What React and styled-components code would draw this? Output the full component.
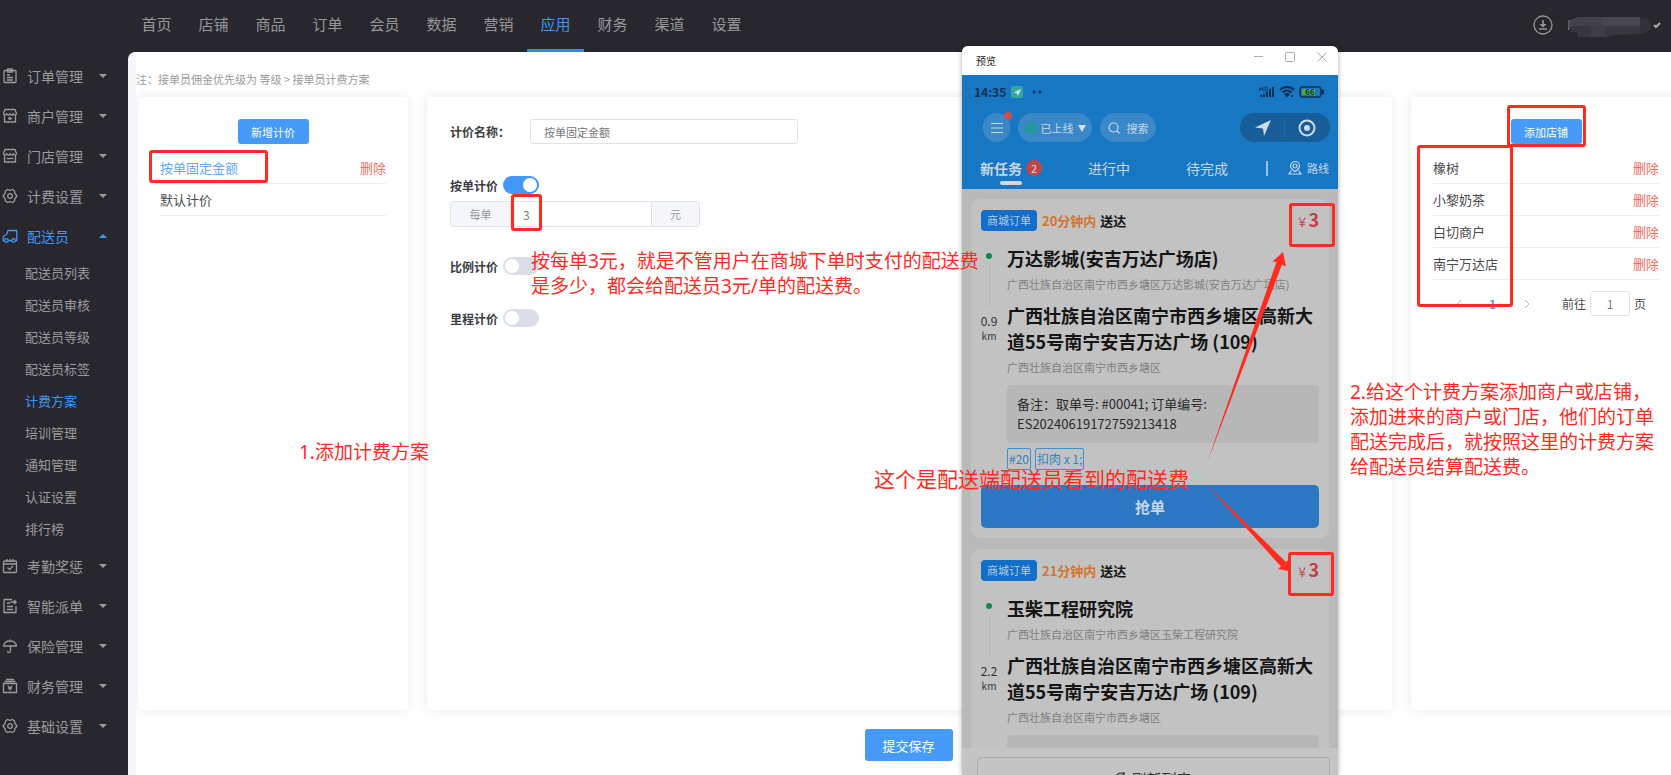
import { useState } from "react";

import styled, { createGlobalStyle, css } from "styled-components";

const GlobalStyle = createGlobalStyle`
  :root {
    --dark: #28272d;
    --blue: #469bf8;
    --red: #ff2b1e;
    --danger: #ff6a5f;
    --line: #ebeef3;
    --border: #dfe3ea;
  }

  * {
    box-sizing: border-box;
  }

  body {
    margin: 0;
    overflow: hidden;
    background: var(--dark);
    color: #4a4b4e;
    font-family: "Noto Sans CJK SC", sans-serif;
    font-size: 13px;
  }

  button,
  input {
    font-family: inherit;
  }

  a {
    color: inherit;
    text-decoration: none;
  }

  button {
    border: 0;
    padding: 0;
    cursor: pointer;
  }
`;

const Page = styled.div`
  position: relative;
  display: flex;
  flex-direction: column;
  height: 100vh;
  overflow: hidden;
`;

/* ---------- top bar ---------- */

const TopBar = styled.header`
  flex: none;
  display: flex;
  justify-content: space-between;
  align-items: stretch;
  height: 52px;
  padding: 0 10px 0 128px;
  color: #97979b;
`;

const TopNav = styled.nav`
  display: flex;
`;

const TopLink = styled.a`
  width: 57px;
  padding-bottom: 1px;
  border-bottom: 3px solid ${(props) => (props.$active ? "#3b86d8" : "transparent")};
  color: ${(props) => (props.$active ? "#3f95f3" : "inherit")};
  font-size: 15px;
  line-height: 48px;
  text-align: center;
`;

const Account = styled.div`
  display: flex;
  align-items: center;
  gap: 14px;
  padding-bottom: 2px;
`;

const IconButton = styled.button`
  display: flex;
  background: none;
  color: inherit;
`;

/* ---------- side menu ---------- */

const Body = styled.div`
  flex: 1;
  display: flex;
  min-height: 0;
`;

const SideBar = styled.nav`
  flex: none;
  width: 128px;
  padding-top: 4px;
  color: #9b9b9f;
`;

const MenuItem = styled.button`
  display: flex;
  align-items: center;
  width: 100%;
  height: 40px;
  padding: 0 21px 0 2px;
  background: none;
  color: ${(props) => (props.$open ? "#3f95f3" : "inherit")};
  font-size: 14px;
  text-align: left;

  span {
    flex: 1;
    margin-left: 9px;
  }
`;

const Caret = styled.i`
  border: 4px solid transparent;
  ${(props) =>
    props.$up
      ? css`
          border-top: 0;
          border-bottom-color: currentColor;
        `
      : css`
          border-bottom: 0;
          border-top-color: currentColor;
        `}
`;

const SubMenu = styled.div`
  display: flex;
  flex-direction: column;
  padding: 1px 0;
`;

const SubLink = styled.a`
  padding-left: 25px;
  color: ${(props) => (props.$active ? "#3f95f3" : "inherit")};
  font-size: 13px;
  line-height: 32px;
`;

/* ---------- content ---------- */

const Main = styled.main`
  flex: 1;
  display: flex;
  flex-direction: column;
  min-width: 0;
  overflow: hidden;
  border-left: 8px solid #f5f7fa;
  border-top-left-radius: 7px;
  background: #fff;
`;

const Note = styled.p`
  flex: none;
  margin: 0;
  padding: 17px 0 8px;
  color: #9a9b9e;
  font-size: 11px;
  line-height: 20px;
`;

const Panels = styled.div`
  flex: 1;
  display: grid;
  grid-template-columns: 270px 1fr 270px;
  gap: 19px;
  margin: 0 -10px 0 2px;
`;

const Panel = styled.section`
  padding: 22px;
  border-radius: 4px;
  background: #fff;
  box-shadow: 0 0 12px 1px rgba(0, 0, 0, 0.08);
`;

const Button = styled.button`
  display: block;
  width: ${(props) => (props.$large ? "88px" : "71px")};
  height: ${(props) => (props.$large ? "32px" : "25px")};
  margin: 0 auto;
  border-radius: 3px;
  background: var(--blue);
  color: #fff;
  font-size: ${(props) => (props.$large ? "13px" : "11px")};
`;

const Actions = styled.div`
  flex: none;
  margin-right: -10px;
  padding: 19px 0 14px;
`;

const List = styled.ul`
  margin: 8px 0 0;
  padding: 0;
  list-style: none;
`;

const ListRow = styled.li`
  display: flex;
  justify-content: space-between;
  align-items: center;
  height: 32px;
  border-bottom: 1px solid var(--line);
  color: ${(props) => (props.$active ? "#61a8f8" : "inherit")};
`;

const DeleteButton = styled.button`
  background: none;
  color: var(--danger);
  font-size: 13px;
`;

const Pager = styled.div`
  display: flex;
  align-items: center;
  height: 25px;
  margin-top: 11px;
  padding-left: 22px;
  font-size: 12px;
`;

const PageButton = styled.button`
  width: 34px;
  background: none;
  color: ${(props) => (props.$current ? "#469bf8" : "#b4b6bb")};
  font-size: 12px;
  font-weight: ${(props) => (props.$current ? 700 : 400)};
  text-align: left;

  svg {
    display: block;
  }
`;

const PageJump = styled.label`
  display: flex;
  align-items: center;
  gap: 4px;
  margin-left: 5px;
`;

const inputBox = css`
  height: 25px;
  border: 1px solid var(--border);
  border-radius: 3px;
  background: #fff;
  color: #77787c;
  font-size: 11px;
  outline: 0;
`;

const PageInput = styled.input`
  ${inputBox}
  width: 40px;
  padding: 0;
  font-size: 12px;
  text-align: center;
`;

const FormPanel = styled(Panel)`
  padding-left: 23px;
`;

const Field = styled.div`
  display: flex;
  align-items: center;
  height: 25px;
  margin-bottom: 32px;
`;

const FieldLabel = styled.label`
  width: 80px;
  color: #3c3d40;
  font-size: 12px;
  font-weight: 700;
`;

const TextInput = styled.input`
  ${inputBox}
  width: 268px;
  padding: 0 13px;
`;

const SwitchRow = styled.label`
  display: flex;
  align-items: center;
  gap: 5px;
  width: max-content;
  height: 18px;
  color: #3c3d40;
  font-size: 12px;
  font-weight: 700;
`;

const SwitchInput = styled.input`
  appearance: none;
  display: flex;
  align-items: center;
  width: 36px;
  height: 18px;
  margin: 0;
  padding: 2px;
  border-radius: 9px;
  background: #dbdee6;
  cursor: pointer;

  &::before {
    content: "";
    width: 14px;
    height: 14px;
    border-radius: 50%;
    background: #fff;
  }

  &:checked {
    justify-content: flex-end;
    background: #4398f7;
  }
`;

const Switches = styled.div`
  display: flex;
  flex-direction: column;
  gap: 34px;
`;

const InputGroup = styled.div`
  display: flex;
  width: 250px;
  height: 26px;
  margin: 7px 0 -4px;
  overflow: hidden;
  border: 1px solid var(--border);
  border-radius: 3px;

  span {
    flex: none;
    width: 47px;
    background: #f4f6fa;
    color: #97999e;
    font-size: 11px;
    line-height: 24px;
    text-align: center;
  }

  span:first-child {
    width: 59px;
  }

  input {
    flex: 1;
    min-width: 0;
    padding: 0 12px;
    border: solid var(--border);
    border-width: 0 1px;
    color: #77787c;
    font-size: 12px;
    outline: 0;
  }
`;

/* ---------- phone preview window ---------- */

const PhoneWindow = styled.section`
  position: absolute;
  top: 46px;
  bottom: 0;
  left: 962px;
  display: flex;
  flex-direction: column;
  width: 376px;
  overflow: hidden;
  border-radius: 6px 6px 0 0;
  background: #b9b9b9;
  box-shadow: 0 0 5px rgba(0, 0, 0, 0.35);
  color: #151515;
`;

const TitleBar = styled.div`
  flex: none;
  display: flex;
  justify-content: space-between;
  align-items: center;
  height: 29px;
  padding: 0 11px 0 14px;
  background: #fff;
  color: #222;
  font-size: 10px;
`;

const WindowButtons = styled.div`
  display: flex;
  gap: 22px;
  padding-bottom: 7px;
  color: #aaa;
`;

const PhoneHeader = styled.div`
  flex: none;
  height: 114px;
  padding-top: 10px;
  background: #1877c3;
  color: #c6d8e8;
`;

const StatusBar = styled.div`
  display: flex;
  align-items: center;
  height: 14px;
  padding: 0 13px 0 12px;
  color: #0b3150;
  font-size: 12px;
  font-weight: 700;
  line-height: 14px;

  svg:last-child {
    margin-left: auto;
  }
`;

const ToolRow = styled.div`
  display: flex;
  gap: 8px;
  height: 29px;
  margin-top: 14px;
  padding: 0 8px 0 21px;
`;

const Pill = styled.button`
  position: relative;
  display: flex;
  justify-content: center;
  align-items: center;
  gap: ${(props) => props.$gap || 5}px;
  width: ${(props) => props.$width}px;
  border-radius: 15px;
  background: #3b88c8;
  color: #c6d8e8;
  font-size: 11px;
`;

const AlertDot = styled.i`
  position: absolute;
  top: -1px;
  right: -2px;
  width: 8px;
  height: 8px;
  border-radius: 50%;
  background: #cc4f4c;
`;

const Capsule = styled.div`
  display: flex;
  justify-content: center;
  align-items: center;
  gap: 13px;
  width: 90px;
  margin-left: auto;
  border-radius: 15px;
  background: #165d99;
  color: #cfdbe6;
`;

const PhoneTabs = styled.div`
  display: grid;
  grid-template-columns: 108px 98px 80px 1fr;
  align-items: center;
  height: 26px;
  margin-top: 13px;
  padding-left: 18px;
`;

const PhoneTab = styled.button`
  position: relative;
  display: flex;
  align-items: center;
  gap: 4px;
  height: 26px;
  background: none;
  color: #c6d8e8;
  font-size: 14px;
  font-weight: ${(props) => (props.$active ? 700 : 400)};

  &::after {
    content: "";
    position: absolute;
    bottom: -4px;
    left: 20px;
    width: 22px;
    height: 4px;
    border-radius: 2px;
    background: ${(props) => (props.$active ? "#cdd9e4" : "none")};
  }
`;

const Count = styled.b`
  width: 16px;
  border-radius: 50%;
  background: #c04747;
  font-size: 11px;
  font-weight: 400;
  line-height: 16px;
  text-align: center;
`;

const RouteButton = styled.button`
  display: flex;
  align-items: center;
  gap: 5px;
  background: none;
  color: #c6d8e8;
  font-size: 11px;

  &::before {
    content: "";
    width: 2px;
    height: 15px;
    margin-right: 15px;
    background: #9fc0dd;
  }
`;

const Orders = styled.div`
  flex: 1;
  display: flex;
  flex-direction: column;
  gap: 11px;
  min-height: 0;
  padding: 10px 9px 0;
  overflow: hidden;
`;

const OrderCard = styled.article`
  flex: none;
  padding: 11px 10px 10px;
  border-radius: 9px;
  background: #c2c2c2;
`;

const OrderTop = styled.div`
  display: flex;
  align-items: center;
  height: 21px;
  font-size: 13px;
  font-weight: 700;
`;

const OrderType = styled.span`
  width: 56px;
  margin-right: 5px;
  border-radius: 4px;
  background: #126ec8;
  color: #b4cce4;
  font-size: 11px;
  font-weight: 400;
  line-height: 21px;
  text-align: center;
`;

const Deadline = styled.span`
  margin-right: 4px;
  color: #d4742f;
`;

const Price = styled.span`
  margin-left: auto;
  color: #c73f46;
  font-size: 18px;
  line-height: 20px;

  small {
    font-size: 12px;
    font-weight: 400;
  }
`;

const OrderBody = styled.div`
  display: grid;
  grid-template-columns: 16px 1fr;
  gap: 10px;
  margin-top: 14px;
`;

const Track = styled.div`
  display: flex;
  flex-direction: column;
  align-items: center;
  padding-top: 8px;
  color: #333;
  font-size: 12px;
  line-height: 16px;

  &::before {
    content: "";
    width: 6px;
    height: 6px;
    border-radius: 50%;
    background: #0b8a50;
  }

  &::after {
    content: "";
    order: 1;
    width: 1px;
    height: 43px;
    margin: 5px 0 6px;
    background: #b4b4b4;
  }

  span {
    order: 2;
  }

  small {
    order: 3;
    font-size: 10px;
    line-height: 14px;
  }
`;

const Place = styled.h3`
  margin: 0;
  font-size: 18px;
  font-weight: 700;
  line-height: 26px;
`;

const Address = styled.p`
  margin: 5px 0 10px;
  color: #7f7f7f;
  font-size: 11px;
  line-height: 16px;
  white-space: nowrap;
`;

const Remark = styled.p`
  min-height: 58px;
  margin: 0;
  padding: 9px 10px;
  border-radius: 4px;
  background: #b7b7b7;
  color: #2a2a2a;
  font-size: 13px;
  line-height: 20px;
  white-space: pre-line;
`;

const Goods = styled.div`
  display: flex;
  gap: 4px;
  margin-top: 5px;

  span {
    padding: 0 1px;
    border: 1px solid #3f8fc9;
    border-radius: 2px;
    color: #2a84c6;
    font-size: 12px;
    line-height: 20px;
  }
`;

const GrabButton = styled.button`
  width: 100%;
  height: 43px;
  margin-top: 15px;
  border-radius: 5px;
  background: #2c77c3;
  color: #c6d6e8;
  font-size: 15px;
  font-weight: 700;
`;

const PhoneFooter = styled.div`
  flex: none;
  height: 27px;
  padding: 9px 8px 0 15px;
  overflow: hidden;
  background: #c4c4c4;
`;

const RefreshButton = styled.button`
  display: flex;
  justify-content: center;
  align-items: center;
  gap: 4px;
  width: 100%;
  height: 42px;
  border: 1px solid #aaa;
  border-radius: 4px;
  background: none;
  color: #333;
  font-size: 15px;
`;

/* ---------- notes drawn over the page ---------- */

const Callout = styled.p`
  position: absolute;
  top: ${(props) => props.$top}px;
  left: ${(props) => props.$left}px;
  margin: 0;
  color: var(--red);
  font-family: "Noto Sans", "Noto Sans CJK SC", sans-serif;
  font-size: ${(props) => props.$size || 19}px;
  line-height: 25px;
  white-space: pre;
`;

const Frame = styled.div`
  position: absolute;
  top: ${(props) => props.$top}px;
  left: ${(props) => props.$left}px;
  width: ${(props) => props.$width}px;
  height: ${(props) => props.$height}px;
  border: 3px solid var(--red);
  border-radius: 3px;
  pointer-events: none;
`;

const Arrows = styled.svg`
  position: absolute;
  top: 250px;
  left: 1200px;
  pointer-events: none;
`;

const icons = {
  clipboard: (
    <>
      <rect x="2" y="2.5" width="12" height="12" rx="1" />
      <path d="M5.5 1h5v3h-5zM5 7h3M5 9.5h6M5 12h6" />
    </>
  ),
  store: (
    <>
      <path d="M3 1.5h10l1.500 4c0 2-3 2-3.200 0 0 2-3.200 2-3.300 0 0 2-3.200 2-3.300 0-.2 2-3.200 2-3.200 0zM2.500 7.500v6.500h11V7.500" />
      <path d="M6 10.500h4M8 9v3" />
    </>
  ),
  shop: (
    <>
      <path d="M3 1.5h10l1.500 4c0 2-3 2-3.200 0 0 2-3.200 2-3.300 0 0 2-3.200 2-3.300 0-.2 2-3.200 2-3.200 0zM2.500 7.500v6.500h11V7.500" />
      <path d="M4.500 10.500h7" />
    </>
  ),
  setting: (
    <>
      <path d="M5.500 1.500 8 2.300l2.500-.8 2 1.500.4 2.300L15 8l-2.100 2.700-.4 2.300-2 1.500-2.500-.8-2.500.8-2-1.500-.4-2.300L1 8l2.100-2.700L3.500 3z" />
      <circle cx="8" cy="8" r="2.3" />
    </>
  ),
  truck: (
    <>
      <path d="M2.500 12.500H1.200V8.500l3.300-2L6 2.500h8.800v10h-1.300M6.300 12.500h3.200" />
      <circle cx="4.4" cy="12.5" r="1.8" />
      <circle cx="11.5" cy="12.5" r="1.8" />
    </>
  ),
  calendar: (
    <>
      <rect x="1.5" y="3" width="13" height="11.5" rx="1" />
      <path d="M1.500 6h13M5 1v3M8 1v3M11 1v3M5.500 9.500l2 2 3.500-3.500" />
    </>
  ),
  document: (
    <path d="M10 1.500H2v13h12V8M5 5h3M5 8.500h6M5 11.500h6M8.500 4H14M12 2l2.200 2L12 6" />
  ),
  umbrella: (
    <path d="M1.500 8C2 4.500 4.500 3 8 3s6 1.500 6.500 5zM8 1.500V3M8.500 8v5c0 2-3 2-3 0" />
  ),
  finance: (
    <>
      <path d="M1.500 5.500h13v9h-13zM2.500 3.500h11M4 1.500h8" />
      <path d="M6 8l2 2.200L10 8M8 10v2.500M6.300 10.500h3.400" />
    </>
  ),
};

const MenuIcon = ({ name }) => (
  <svg
    width="16"
    height="16"
    viewBox="0 0 16 16"
    fill="none"
    stroke="currentColor"
    strokeWidth="1.3"
    strokeLinejoin="round"
  >
    {icons[name]}
  </svg>
);

const topLinks = ["首页", "店铺", "商品", "订单", "会员", "数据", "营销", "应用", "财务", "渠道", "设置"];

const courierLinks = [
  "配送员列表",
  "配送员审核",
  "配送员等级",
  "配送员标签",
  "计费方案",
  "培训管理",
  "通知管理",
  "认证设置",
  "排行榜",
];

const menu = [
  { name: "订单管理", icon: "clipboard" },
  { name: "商户管理", icon: "store" },
  { name: "门店管理", icon: "shop" },
  { name: "计费设置", icon: "setting" },
  { name: "配送员", icon: "truck", links: courierLinks },
  { name: "考勤奖惩", icon: "calendar" },
  { name: "智能派单", icon: "document" },
  { name: "保险管理", icon: "umbrella" },
  { name: "财务管理", icon: "finance" },
  { name: "基础设置", icon: "setting" },
];

const shops = ["橡树", "小黎奶茶", "白切商户", "南宁万达店"];

const orders = [
  {
    time: "20分钟内",
    shop: "万达影城(安吉万达广场店)",
    address: "广西壮族自治区南宁市西乡塘区万达影城(安吉万达广场店)",
    distance: "0.9",
    remark: "备注：取单号: #00041; 订单编号:\nES20240619172759213418",
    goods: ["#20", "扣肉 x 1;"],
  },
  {
    time: "21分钟内",
    shop: "玉柴工程研究院",
    address: "广西壮族自治区南宁市西乡塘区玉柴工程研究院",
    distance: "2.2",
  },
];

const Header = () => (
  <TopBar>
    <TopNav>
      {topLinks.map((name) => (
        <TopLink key={name} href="#" $active={name === "应用"}>
          {name}
        </TopLink>
      ))}
    </TopNav>
    <Account>
      <IconButton aria-label="下载">
        <svg width="20" height="20" viewBox="0 0 20 20" fill="none" stroke="currentColor">
          <circle cx="10" cy="10" r="9" strokeWidth="1.3" />
          <path d="M10 5v6M6 14h8" strokeWidth="1.6" />
          <path d="M6.500 9h7L10 12.500z" fill="currentColor" stroke="none" />
        </svg>
      </IconButton>
      <IconButton aria-label="账号">
        <svg width="94" height="24" viewBox="0 0 94 24">
          <path d="M2 7v9l-1 1" fill="none" stroke="#7b8a93" />
          <path d="M3 7l8-3h62v9H3z" fill="#434248" />
          <path d="M35 4h38v9H35z" fill="#48474d" />
          <path d="M73 5c14 0 17 13 0 16z" fill="#323137" />
          <path d="M3 13h70v8l-26 1-6 2H11l-1-5H3z" fill="#38373d" />
          <path d="M24 13h15v11H24z" fill="#3f3d48" />
          <path d="M87 12l2 2 4-4" fill="none" stroke="#aaa" strokeWidth="2" />
        </svg>
      </IconButton>
    </Account>
  </TopBar>
);

const Menu = () => (
  <SideBar>
    {menu.map(({ name, icon, links }) => (
      <div key={name}>
        <MenuItem $open={!!links}>
          <MenuIcon name={icon} />
          <span>{name}</span>
          <Caret $up={!!links} />
        </MenuItem>
        {links && (
          <SubMenu>
            {links.map((link) => (
              <SubLink key={link} href="#" $active={link === "计费方案"}>
                {link}
              </SubLink>
            ))}
          </SubMenu>
        )}
      </div>
    ))}
  </SideBar>
);

const PricingForm = () => {
  const [modes, setModes] = useState({ order: true, ratio: false, mileage: false });
  const toggle = (key) => setModes({ ...modes, [key]: !modes[key] });

  return (
    <FormPanel>
      <Field>
        <FieldLabel htmlFor="plan-name">计价名称：</FieldLabel>
        <TextInput id="plan-name" defaultValue="按单固定金额" />
      </Field>
      <Switches>
        <div>
          <SwitchRow>
            按单计价
            <SwitchInput type="checkbox" checked={modes.order} onChange={() => toggle("order")} />
          </SwitchRow>
          {modes.order && (
            <InputGroup>
              <span>每单</span>
              <input aria-label="每单金额" defaultValue="3" />
              <span>元</span>
            </InputGroup>
          )}
        </div>
        <SwitchRow>
          比例计价
          <SwitchInput type="checkbox" checked={modes.ratio} onChange={() => toggle("ratio")} />
        </SwitchRow>
        <SwitchRow>
          里程计价
          <SwitchInput type="checkbox" checked={modes.mileage} onChange={() => toggle("mileage")} />
        </SwitchRow>
      </Switches>
    </FormPanel>
  );
};

const ShopPanel = () => (
  <Panel>
    <Button>添加店铺</Button>
    <List>
      {shops.map((shop) => (
        <ListRow key={shop}>
          {shop}
          <DeleteButton>删除</DeleteButton>
        </ListRow>
      ))}
    </List>
    <Pager>
      <PageButton aria-label="上一页">
        <svg width="8" height="10" viewBox="0 0 8 10" fill="none" stroke="currentColor">
          <path d="M6 1L2 5l4 4" />
        </svg>
      </PageButton>
      <PageButton $current>1</PageButton>
      <PageButton aria-label="下一页">
        <svg width="8" height="10" viewBox="0 0 8 10" fill="none" stroke="currentColor">
          <path d="M2 1l4 4-4 4" />
        </svg>
      </PageButton>
      <PageJump>
        前往
        <PageInput defaultValue="1" />
        页
      </PageJump>
    </Pager>
  </Panel>
);

const Order = ({ order }) => (
  <OrderCard>
    <OrderTop>
      <OrderType>商城订单</OrderType>
      <Deadline>{order.time}</Deadline>
      送达
      <Price>
        <small>￥</small>3
      </Price>
    </OrderTop>
    <OrderBody>
      <Track>
        <span>{order.distance}</span>
        <small>km</small>
      </Track>
      <div>
        <Place>{order.shop}</Place>
        <Address>{order.address}</Address>
        <Place>广西壮族自治区南宁市西乡塘区高新大道55号南宁安吉万达广场 (109)</Place>
        <Address>广西壮族自治区南宁市西乡塘区</Address>
        <Remark>{order.remark}</Remark>
        {order.goods && (
          <Goods>
            {order.goods.map((item) => (
              <span key={item}>{item}</span>
            ))}
          </Goods>
        )}
      </div>
    </OrderBody>
    {order.goods && <GrabButton>抢单</GrabButton>}
  </OrderCard>
);

const PhonePreview = () => (
  <PhoneWindow>
    <TitleBar>
      预览
      <WindowButtons>
        <IconButton aria-label="最小化">
          <svg width="10" height="10" stroke="currentColor" fill="none">
            <path d="M1 4.500h9" />
          </svg>
        </IconButton>
        <IconButton aria-label="最大化">
          <svg width="10" height="10" stroke="currentColor" fill="none">
            <rect x=".5" y=".5" width="9" height="9" rx="1" />
          </svg>
        </IconButton>
        <IconButton aria-label="关闭">
          <svg width="10" height="10" stroke="currentColor" fill="none">
            <path d="M.5.5l9 9M9.500.5l-9 9" />
          </svg>
        </IconButton>
      </WindowButtons>
    </TitleBar>
    <PhoneHeader>
      <StatusBar>
        14:35
        <svg width="38" height="12" viewBox="0 0 38 12">
          <rect x="5" width="12" height="12" rx="2" fill="#35a89f" />
          <path d="M7.500 6.500L15 3l-3 7-1.500-3z" fill="#c8e6e2" />
          <circle cx="28" cy="6" r="1.5" fill="#0b3150" />
          <circle cx="34" cy="6" r="1.5" fill="#0b3150" />
        </svg>
        <svg width="66" height="14" viewBox="0 0 66 14" fill="currentColor">
          <path d="M1 10h2v2H1zM4 9h2v3H4zM7 7h2v5H7zM10 4h2v8h-2zM13 2h2v10h-2z" />
          <path d="M1 2v4M4 2v4M1 4h3M6 2v4h1.500l1-1V3l-1-1z" fill="none" stroke="currentColor" strokeWidth=".8" />
          <path
            d="M21 5c4-4 10-4 14 0M23.500 7.500c3-2.500 6-2.500 9 0"
            fill="none"
            stroke="currentColor"
            strokeWidth="2"
          />
          <path d="M25 9c2-1.500 4-1.500 6 0l-3 3.500zM32 10h2v2h-2z" />
          <rect x="41" y="2" width="21" height="10" rx="3" fill="none" stroke="currentColor" strokeWidth="1.6" />
          <rect x="43" y="4" width="13" height="6" rx="1" fill="#4fae35" />
          <path d="M63.500 5v4h1V5z" stroke="currentColor" />
          <text x="46" y="10" fontSize="8">
            66
          </text>
        </svg>
      </StatusBar>
      <ToolRow>
        <Pill $width={27} aria-label="菜单">
          <svg width="12" height="12" stroke="currentColor">
            <path d="M0 1.500h12M0 6h12M0 10.500h12" />
          </svg>
          <AlertDot />
        </Pill>
        <Pill $width={74} $gap={4}>
          <svg width="12" height="12" fill="none" stroke="#16a286" strokeWidth="2">
            <circle cx="6" cy="6" r="5" />
            <path d="M3.500 6l2 2 3.500-4" />
          </svg>
          已上线
          <svg width="8" height="8" fill="#d5e0ea">
            <path d="M0 1h8L4 8z" />
          </svg>
        </Pill>
        <Pill $width={56} $gap={7}>
          <svg width="12" height="12" fill="none" stroke="currentColor" strokeWidth="1.2">
            <circle cx="5.5" cy="5.5" r="4.5" />
            <path d="M9 9l2.500 2.500" />
          </svg>
          搜索
        </Pill>
        <Capsule>
          <svg width="16" height="16" fill="currentColor">
            <path d="M0 7.500L16 0 9 16 8 8.500z" />
          </svg>
          <svg width="1" height="18">
            <path d="M0 0h1v18H0z" fill="#2b689d" />
          </svg>
          <svg width="18" height="18" fill="none" stroke="currentColor" strokeWidth="2">
            <circle cx="9" cy="9" r="7.5" />
            <circle cx="9" cy="9" r="3" fill="currentColor" stroke="none" />
          </svg>
        </Capsule>
      </ToolRow>
      <PhoneTabs>
        <PhoneTab $active>
          新任务<Count>2</Count>
        </PhoneTab>
        <PhoneTab>进行中</PhoneTab>
        <PhoneTab>待完成</PhoneTab>
        <RouteButton>
          <svg width="14" height="14" fill="none" stroke="currentColor" strokeWidth="1.2">
            <path d="M7 10.500C4 8.500 2.500 7 2.500 5a4.500 4.500 0 0 1 9 0c0 2-1.500 3.500-4.500 5.500zM3.500 9.500L1 13h12l-2.500-3.500" />
            <circle cx="7" cy="5" r="2" />
          </svg>
          路线
        </RouteButton>
      </PhoneTabs>
    </PhoneHeader>
    <Orders>
      {orders.map((order) => (
        <Order key={order.distance} order={order} />
      ))}
    </Orders>
    <PhoneFooter>
      <RefreshButton>
        <svg width="12" height="12" fill="none" stroke="currentColor" strokeWidth="1.2">
          <path d="M11 6a5 5 0 1 1-2-4M9 0v3H6" />
        </svg>
        刷新列表
      </RefreshButton>
    </PhoneFooter>
  </PhoneWindow>
);

const Guides = () => (
  <>
    <Frame $left={149} $top={150} $width={119} $height={33} />
    <Frame $left={511} $top={194} $width={31} $height={37} />
    <Frame $left={1289} $top={203} $width={46} $height={44} />
    <Frame $left={1288} $top={552} $width={46} $height={44} />
    <Frame $left={1507} $top={105} $width={79} $height={42} />
    <Frame $left={1417} $top={145} $width={96} $height={162} />
    <Arrows width="100" height="330" viewBox="1200 250 100 330" fill="#ff2b1e">
      <path d="M1207 463L1276.500 262l-4-.5L1283 252l3 14.500-4-2z" />
      <path d="M1207 485L1286 562l3-3 2 12.500-13-2.500 3-2.500z" />
    </Arrows>
    <Callout $left={299} $top={440}>
      1.添加计费方案
    </Callout>
    <Callout $left={531} $top={249}>
      {"按每单3元，就是不管用户在商城下单时支付的配送费\n是多少，都会给配送员3元/单的配送费。"}
    </Callout>
    <Callout $left={874} $top={467} $size={21}>
      这个是配送端配送员看到的配送费
    </Callout>
    <Callout $left={1350} $top={380}>
      {"2.给这个计费方案添加商户或店铺，\n添加进来的商户或门店，他们的订单\n配送完成后，就按照这里的计费方案\n给配送员结算配送费。"}
    </Callout>
  </>
);

const App = () => {
  return (
    <Page>
      <GlobalStyle />
      <Header />
      <Body>
        <Menu />
        <Main>
          <Note>注：接单员佣金优先级为 等级 &gt; 接单员计费方案</Note>
          <Panels>
            <Panel>
              <Button>新增计价</Button>
              <List>
                <ListRow $active>
                  按单固定金额
                  <DeleteButton>删除</DeleteButton>
                </ListRow>
                <ListRow>默认计价</ListRow>
              </List>
            </Panel>
            <PricingForm />
            <ShopPanel />
          </Panels>
          <Actions>
            <Button $large>提交保存</Button>
          </Actions>
        </Main>
      </Body>
      <PhonePreview />
      <Guides />
    </Page>
  );
};

export default App;
